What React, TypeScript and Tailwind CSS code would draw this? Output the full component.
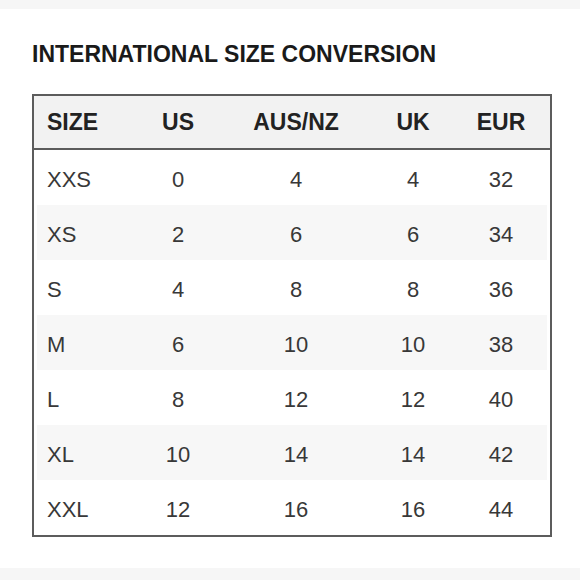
const rows = [
  ["XXS", "0", "4", "4", "32"],
  ["XS", "2", "6", "6", "34"],
  ["S", "4", "8", "8", "36"],
  ["M", "6", "10", "10", "38"],
  ["L", "8", "12", "12", "40"],
  ["XL", "10", "14", "14", "42"],
  ["XXL", "12", "16", "16", "44"],
];

export default function App() {
  return (
    <div className="flex h-[580px] w-[580px] flex-col bg-white font-['Liberation_Sans',Arial,sans-serif]">
      <div className="h-[9px] bg-[#f6f6f6]" />
      <h1 className="ml-[32px] mt-[31px] text-[23px] font-bold leading-[28px] text-[#1a1a1a]">
        INTERNATIONAL SIZE CONVERSION
      </h1>
      <div className="ml-[32px] mt-[26px] w-[520px] border-2 border-[#5c5c5c]">
        <div className="grid h-[54px] grid-cols-[96px_96px_140px_94px_82px_1fr] items-center border-b-2 border-[#5c5c5c] bg-[#f2f2f2] pt-[1px] text-[23px] font-bold text-[#222]">
          <span className="pl-[13px]">SIZE</span>
          <span className="text-center">US</span>
          <span className="text-center">AUS/NZ</span>
          <span className="text-center">UK</span>
          <span className="text-center">EUR</span>
        </div>
        {rows.map((r, i) => (
          <div
            key={r[0]}
            className={`mx-[3px] grid h-[55px] grid-cols-[93px_96px_140px_94px_82px_1fr] items-center pt-[3px] text-[22px] text-[#383838] ${i % 2 === 1 ? "bg-[#f7f7f7]" : "bg-white"}`}
          >
            <span className="pl-[10px]">{r[0]}</span>
            <span className="text-center">{r[1]}</span>
            <span className="text-center">{r[2]}</span>
            <span className="text-center">{r[3]}</span>
            <span className="text-center">{r[4]}</span>
          </div>
        ))}
      </div>
      <div className="mt-auto h-[12px] bg-[#f6f6f6]" />
    </div>
  );
}
